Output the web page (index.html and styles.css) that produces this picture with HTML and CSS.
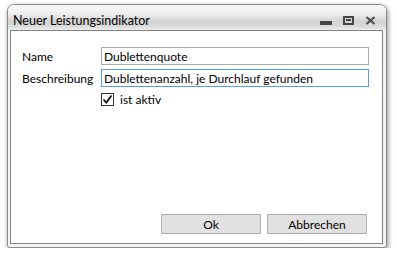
FILE: index.html
```html
<!DOCTYPE html>
<html lang="de">
<head>
    <meta charset="UTF-8">
    <title>Neuer Leistungsindikator</title>
    <link rel="stylesheet" href="styles.css">
</head>
<body>
    <div class="window">
        <div class="titlebar">
            <span class="title">Neuer Leistungsindikator</span>
            <div class="controls">
                <svg class="ctl" width="12" height="4" viewBox="0 0 12 4">
                    <rect x="0" y="0" width="12" height="4" fill="#454545"/>
                </svg>
                <svg class="ctl" width="11" height="9" viewBox="0 0 11 9">
                    <rect x="1" y="1" width="9" height="7" fill="none" stroke="#454545" stroke-width="2"/>
                    <rect x="3" y="3" width="5" height="2" fill="#454545"/>
                </svg>
                <svg class="ctl" width="11" height="9" viewBox="0 0 11 9">
                    <path d="M1.5 1 L9.5 8 M9.5 1 L1.5 8" stroke="#505050" stroke-width="2.2"/>
                </svg>
            </div>
        </div>
        <div class="client">
            <div class="form">
                <label class="label">Name</label>
                <input class="field" type="text" value="Dublettenquote" readonly>
                <label class="label">Beschreibung</label>
                <input class="field focused" type="text" value="Dublettenanzahl, je Durchlauf gefunden" readonly>
                <span></span>
                <div class="check-row">
                    <span class="checkbox">
                        <svg width="11" height="11" viewBox="0 0 11 11">
                            <path d="M1.5 5.5 L4.3 8.5 L9.5 1.5" fill="none" stroke="#111" stroke-width="1.8"/>
                        </svg>
                    </span>
                    <span class="check-label">ist aktiv</span>
                </div>
            </div>
            <div class="buttons">
                <button class="btn">Ok</button>
                <button class="btn">Abbrechen</button>
            </div>
        </div>
    </div>
</body>
</html>
```

FILE: styles.css
```css
body {
    margin: 0;
    padding: 4px 0 0 7px;
    background: #fff;
    font-family: Lato, 'Open Sans', sans-serif;
    font-size: 12px;
    color: #000;
}

.window {
    width: 378px;
    height: 242px;
    border: 1px solid #8a8a8a;
    border-radius: 7px 7px 3px 3px;
    background: #f4f4f4;
    box-shadow: 1px 2px 5px rgba(0, 0, 0, 0.45);
    display: flex;
    flex-direction: column;
}

.titlebar {
    height: 25px;
    display: flex;
    align-items: flex-end;
    justify-content: space-between;
    padding: 0 10px 5px 5px;
    box-sizing: border-box;
    border-radius: 6px 6px 0 0;
    background: linear-gradient(#f8f8f8 0%, #ededed 35%, #d3d3d3 65%, #dadada 85%, #ececec 100%);
}

.title {
    font-size: 12.5px;
    line-height: 16px;
    margin-bottom: -4px;
}

.controls {
    display: flex;
    align-items: flex-end;
    gap: 11px;
}

.ctl {
    display: block;
}

.client {
    flex: 1;
    margin: 0 3px 3px 2px;
    border: 1px solid #828282;
    background: #fff;
    display: flex;
    flex-direction: column;
    padding: 16px 15px 9px 11px;
}

.form {
    display: grid;
    grid-template-columns: 79px 268px;
    row-gap: 4px;
    align-items: center;
}

.field {
    height: 18px;
    box-sizing: border-box;
    margin: 0;
    border: 1px solid #ababab;
    padding: 0 2px;
    font: inherit;
    color: #000;
    outline: none;
}

.field.focused {
    border-color: #569de5;
}

.check-row {
    display: flex;
    align-items: center;
    gap: 6px;
    margin-top: 1px;
}

.checkbox {
    width: 13px;
    height: 13px;
    box-sizing: border-box;
    border: 1px solid #333;
    background: #fff;
    display: flex;
    align-items: center;
    justify-content: center;
}

.buttons {
    margin-top: auto;
    display: flex;
    justify-content: flex-end;
    gap: 6px;
}

.btn {
    width: 100px;
    height: 20px;
    margin: 0;
    padding: 0;
    border: 1px solid #adadad;
    background: #e1e1e1;
    font: inherit;
    color: #000;
}
```
